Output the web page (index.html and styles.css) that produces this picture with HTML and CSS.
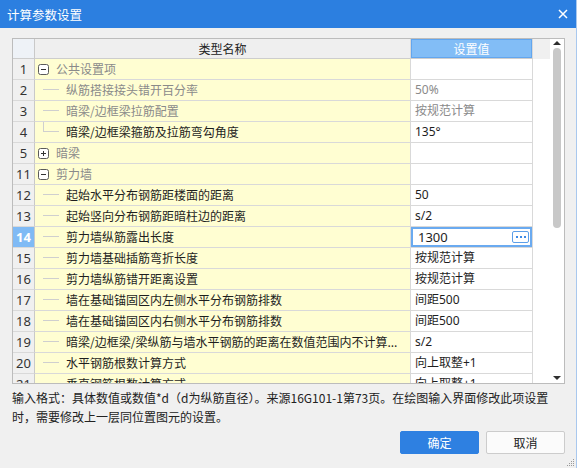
FILE: index.html
```html
<!DOCTYPE html>
<html lang="zh-CN">
<head>
<meta charset="utf-8">
<title>计算参数设置</title>
<link rel="stylesheet" href="styles.css">
</head>
<body>
<div class="window">
  <div class="titlebar">
    <span class="title">计算参数设置</span>
    <svg class="close" width="10" height="10" viewBox="0 0 10 10"><path d="M1 1L9 9M9 1L1 9" stroke="#fff" stroke-width="1.5" fill="none"/></svg>
  </div>
  <div class="content">
    <div class="grid">
      <div class="table">
        <div class="row head">
          <div class="rn"></div>
          <div class="name">类型名称</div>
          <div class="val">设置值</div>
          <div class="fill"></div>
        </div>
        <div class="row">
          <div class="rn">1</div>
          <div class="name"><svg class="box" width="11" height="11" viewBox="0 0 11 11"><rect x="0.5" y="0.5" width="10" height="10" rx="2" fill="#fff" stroke="#5a5a5a"/><path d="M3 5.5H8" stroke="#333"/></svg><span class="t gray">公共设置项</span></div>
          <div class="val"></div>
          <div class="fill"></div>
        </div>
        <div class="row">
          <div class="rn">2</div>
          <div class="name"><span class="branch"></span><span class="t gray">纵筋搭接接头错开百分率</span></div>
          <div class="val gray">50%</div>
          <div class="fill"></div>
        </div>
        <div class="row">
          <div class="rn">3</div>
          <div class="name"><span class="branch"></span><span class="t gray">暗梁/边框梁拉筋配置</span></div>
          <div class="val gray">按规范计算</div>
          <div class="fill"></div>
        </div>
        <div class="row">
          <div class="rn">4</div>
          <div class="name"><span class="branch last"></span><span class="t">暗梁/边框梁箍筋及拉筋弯勾角度</span></div>
          <div class="val">135°</div>
          <div class="fill"></div>
        </div>
        <div class="row">
          <div class="rn">5</div>
          <div class="name"><svg class="box" width="11" height="11" viewBox="0 0 11 11"><rect x="0.5" y="0.5" width="10" height="10" rx="2" fill="#fff" stroke="#5a5a5a"/><path d="M3 5.5H8M5.5 3V8" stroke="#333"/></svg><span class="t gray">暗梁</span></div>
          <div class="val"></div>
          <div class="fill"></div>
        </div>
        <div class="row">
          <div class="rn">11</div>
          <div class="name"><svg class="box" width="11" height="11" viewBox="0 0 11 11"><rect x="0.5" y="0.5" width="10" height="10" rx="2" fill="#fff" stroke="#5a5a5a"/><path d="M3 5.5H8" stroke="#333"/></svg><span class="t gray">剪力墙</span></div>
          <div class="val"></div>
          <div class="fill"></div>
        </div>
        <div class="row">
          <div class="rn">12</div>
          <div class="name"><span class="branch"></span><span class="t">起始水平分布钢筋距楼面的距离</span></div>
          <div class="val">50</div>
          <div class="fill"></div>
        </div>
        <div class="row">
          <div class="rn">13</div>
          <div class="name"><span class="branch"></span><span class="t">起始竖向分布钢筋距暗柱边的距离</span></div>
          <div class="val">s/2</div>
          <div class="fill"></div>
        </div>
        <div class="row current">
          <div class="rn">14</div>
          <div class="name"><span class="branch"></span><span class="t">剪力墙纵筋露出长度</span></div>
          <div class="val edit"><span class="edit-text">1300</span><span class="more"><i></i><i></i><i></i></span></div>
          <div class="fill"></div>
        </div>
        <div class="row">
          <div class="rn">15</div>
          <div class="name"><span class="branch"></span><span class="t">剪力墙基础插筋弯折长度</span></div>
          <div class="val">按规范计算</div>
          <div class="fill"></div>
        </div>
        <div class="row">
          <div class="rn">16</div>
          <div class="name"><span class="branch"></span><span class="t">剪力墙纵筋错开距离设置</span></div>
          <div class="val">按规范计算</div>
          <div class="fill"></div>
        </div>
        <div class="row">
          <div class="rn">17</div>
          <div class="name"><span class="branch"></span><span class="t">墙在基础锚固区内左侧水平分布钢筋排数</span></div>
          <div class="val">间距500</div>
          <div class="fill"></div>
        </div>
        <div class="row">
          <div class="rn">18</div>
          <div class="name"><span class="branch"></span><span class="t">墙在基础锚固区内右侧水平分布钢筋排数</span></div>
          <div class="val">间距500</div>
          <div class="fill"></div>
        </div>
        <div class="row">
          <div class="rn">19</div>
          <div class="name"><span class="branch"></span><span class="t">暗梁/边框梁/梁纵筋与墙水平钢筋的距离在数值范围内不计算...</span></div>
          <div class="val">s/2</div>
          <div class="fill"></div>
        </div>
        <div class="row">
          <div class="rn">20</div>
          <div class="name"><span class="branch"></span><span class="t">水平钢筋根数计算方式</span></div>
          <div class="val">向上取整+1</div>
          <div class="fill"></div>
        </div>
        <div class="row partial">
          <div class="rn">21</div>
          <div class="name"><span class="branch"></span><span class="t">垂直钢筋根数计算方式</span></div>
          <div class="val">向上取整+1</div>
          <div class="fill"></div>
        </div>
      </div>
      <div class="scroll">
        <span class="arrow up"></span>
        <span class="thumb"></span>
        <span class="spacer"></span>
        <span class="arrow down"></span>
      </div>
    </div>
    <p class="hint">输入格式：具体数值或数值*d（d为纵筋直径）。来源16G101-1第73页。在绘图输入界面修改此项设置时，需要修改上一层同位置图元的设置。</p>
    <div class="buttons">
      <button class="btn primary">确定</button>
      <button class="btn">取消</button>
    </div>
  </div>
  <svg class="grip" width="8" height="8" viewBox="0 0 8 8"><g fill="#9a9a9a"><rect x="6" y="0" width="1" height="1"/><rect x="4" y="2" width="1" height="1"/><rect x="6" y="2" width="1" height="1"/><rect x="2" y="4" width="1" height="1"/><rect x="4" y="4" width="1" height="1"/><rect x="6" y="4" width="1" height="1"/><rect x="0" y="6" width="1" height="1"/><rect x="2" y="6" width="1" height="1"/><rect x="4" y="6" width="1" height="1"/><rect x="6" y="6" width="1" height="1"/></g></svg>
</div>
</body>
</html>
```

FILE: styles.css
```css
* { box-sizing: border-box; }
html, body { margin: 0; padding: 0; }
body {
  width: 577px;
  height: 468px;
  overflow: hidden;
  font-family: "Noto Sans", "Noto Sans CJK SC", sans-serif;
  font-size: 12px;
  color: #1e1e1e;
}
.window {
  position: relative;
  width: 577px;
  height: 468px;
  background: #f0f0f0;
  border-right: 1px solid #a9c8ee;
}
.titlebar {
  height: 28px;
  background: #2c7fe0;
  display: flex;
  align-items: center;
  justify-content: space-between;
  padding: 0 8px 0 7px;
}
.title {
  color: #fff;
  font-size: 12.5px;
  font-family: "Noto Sans CJK SC", sans-serif;
}
.content {
  padding: 10px 11px 0 12px;
}
.grid {
  display: flex;
  height: 346px;
  border: 1px solid #bcbcbc;
  background: #fff;
}
.table {
  flex: 1;
  overflow: hidden;
}
.row {
  display: grid;
  grid-template-columns: 22px 376px 122px 1fr;
  height: 21px;
}
.row > div {
  border-bottom: 1px solid #d9d9d9;
  border-right: 1px solid #d9d9d9;
  line-height: 20px;
  white-space: nowrap;
  overflow: hidden;
}
.row > .fill { border-right: none; border-bottom: none; }
.row.partial { height: 9px; overflow: hidden; }
.row.partial > div {
  height: 9px;
  border-bottom: none;
  align-items: flex-start;
}
.rn {
  background: #f0f0f0;
  text-align: center;
  color: #333;
  font-size: 13px;
  border-right-color: #c9c9c9 !important;
}
.name {
  background: #fffed2;
  display: flex;
  align-items: center;
  font-family: "Noto Sans CJK SC", sans-serif;
}
.val {
  padding-left: 4px;
  font-family: "Noto Sans", "Noto Sans CJK SC", sans-serif;
}
.gray { color: #8a8a8a; }
.box {
  margin-left: 3px;
  margin-right: 7px;
  flex: none;
}
.branch {
  align-self: flex-start;
  flex: none;
  width: 16px;
  height: 10px;
  margin-left: 8px;
  margin-right: 7px;
  border-bottom: 1px solid #cfcfcf;
}
.branch.last { border-left: 1px solid #cfcfcf; }

.row.head { height: 20px; }
.row.head > div {
  line-height: 19px;
  border-bottom-color: #cdcdcd;
}
.head .rn { background: #eef2f7; }
.head .name {
  background: #efefef;
  justify-content: center;
  color: #222;
}
.head .val {
  background: #82bdf6;
  color: #fff;
  text-align: center;
  padding-left: 0;
  box-shadow: inset 0 0 0 1px #62a6ef;
  font-family: "Noto Sans CJK SC", sans-serif;
}
.head .fill { background: #f0f0f0; }

.current .rn {
  background: #7fbaf5;
  color: #fff;
  font-weight: bold;
}
.val.edit {
  display: flex;
  align-items: center;
  justify-content: space-between;
  padding: 0 3px 0 7px;
  box-shadow: inset 0 0 0 2px #6aaaf0;
  font-size: 13px;
}
.more {
  width: 17px;
  height: 12px;
  border: 1px solid #5d9fe8;
  border-radius: 2px;
  display: flex;
  align-items: center;
  justify-content: center;
  gap: 2px;
  background: #fff;
}
.more i {
  width: 2px;
  height: 2px;
  background: #3d8ae6;
}

.scroll {
  width: 14px;
  display: flex;
  flex-direction: column;
  align-items: center;
  background: #fff;
}
.arrow {
  width: 0;
  height: 0;
  border-left: 4px solid transparent;
  border-right: 4px solid transparent;
}
.arrow.up {
  margin-top: 2px;
  border-bottom: 4px solid #2e2e2e;
}
.arrow.down {
  margin-bottom: 3px;
  border-top: 4px solid #2e2e2e;
}
.thumb {
  margin-top: 3px;
  width: 8px;
  height: 180px;
  border-radius: 4px;
  background: #c8c8c8;
}
.spacer { flex: 1; }

.hint {
  margin: 4px 0 0 0;
  line-height: 19px;
  height: 38px;
  color: #222;
  font-family: "Noto Sans CJK SC", sans-serif;
  font-size: 12px;
  padding-right: 2px;
}
.buttons {
  display: flex;
  justify-content: flex-end;
  gap: 7px;
  margin-top: 5px;
}
.btn {
  width: 79px;
  height: 23px;
  border: 1px solid #cccccc;
  border-radius: 2px;
  background: #fbfbfb;
  font-family: "Noto Sans CJK SC", sans-serif;
  font-size: 12px;
  color: #222;
  padding: 0;
}
.btn.primary {
  background: #2e80e1;
  border-color: #2e80e1;
  color: #fff;
}
.grip {
  position: absolute;
  right: 1px;
  bottom: 1px;
}
```
